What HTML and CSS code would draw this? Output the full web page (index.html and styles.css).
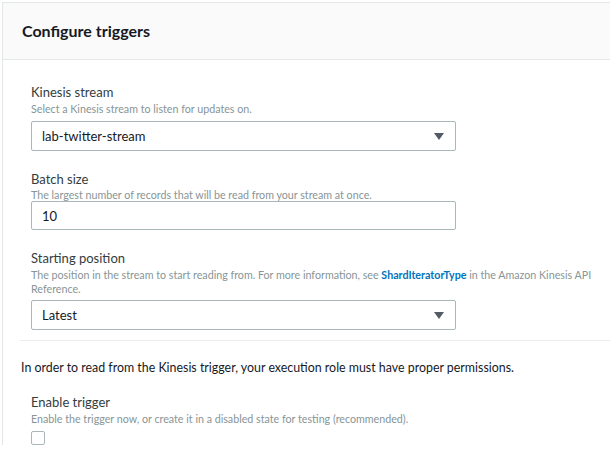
FILE: index.html
```html
<!DOCTYPE html>
<html>
<head>
<meta charset="utf-8">
<link rel="stylesheet" href="styles.css">
</head>
<body>
<div class="card">
  <div class="card-header"><h2 class="title">Configure triggers</h2></div>
  <div class="card-body">
    <div class="fields">
      <div class="field">
        <div class="label">Kinesis stream</div>
        <div class="hint">Select a Kinesis stream to listen for updates on.</div>
        <div class="control select"><span>lab-twitter-stream</span><span class="caret"></span></div>
      </div>
      <div class="field">
        <div class="label">Batch size</div>
        <div class="hint short">The largest number of records that will be read from your stream at once.</div>
        <div class="control input tight"><span>10</span></div>
      </div>
      <div class="field">
        <div class="label">Starting position</div>
        <div class="hint wide">The position in the stream to start reading from. For more information, see <a class="link">ShardIteratorType</a> in the Amazon Kinesis API Reference.</div>
        <div class="control select after-wide"><span>Latest</span><span class="caret"></span></div>
      </div>
    </div>
    <div class="divider"></div>
    <p class="note">In order to read from the Kinesis trigger, your execution role must have proper permissions.</p>
    <div class="field enable">
      <div class="label">Enable trigger</div>
      <div class="hint">Enable the trigger now, or create it in a disabled state for testing (recommended).</div>
      <div class="checkbox"></div>
    </div>
  </div>
</div>
</body>
</html>
```
FILE: styles.css
```css
html, body {
  margin: 0;
  padding: 0;
  background: #ffffff;
  font-family: "Lato", "Open Sans", sans-serif;
  color: #16191f;
}
.card {
  margin: 2px 0 0 2px;
  border-top: 1px solid #e4e7e7;
  border-left: 1px solid #e4e7e7;
  background: #fff;
}
.card-header {
  background: #fafafa;
  border-bottom: 1px solid #e4e7e7;
  height: 57px;
  box-sizing: border-box;
  padding: 0 0 1px 19px;
  display: flex;
  align-items: center;
}
.title {
  margin: 0;
  font-size: 16px;
  font-weight: 700;
  color: #16191f;
}
.card-body {
  padding: 24px 0 0 17px;
}
.fields {
  padding-left: 11px;
  display: flex;
  flex-direction: column;
  gap: 20px;
}
.label {
  font-size: 13px;
  color: #333d3e;
  line-height: 16px;
}
.hint {
  font-size: 10.7px;
  color: #879596;
  line-height: 14px;
  margin-top: 2px;
}
.hint.short {
  line-height: 12px;
}
.hint.wide {
  width: 572px;
}
.link {
  color: #0073bb;
  font-weight: 700;
}
.control {
  margin-top: 5px;
  height: 28px;
  border: 1px solid #aab7b8;
  border-radius: 2px;
  display: flex;
  align-items: center;
  justify-content: space-between;
  padding: 0 11px 0 10px;
  width: 402px;
  font-size: 13px;
  color: #16191f;
}
.control.tight {
  margin-top: 0;
  height: 27px;
}
.control.after-wide {
  margin-top: 4px;
}
.caret {
  width: 0;
  height: 0;
  border-left: 5.5px solid transparent;
  border-right: 5.5px solid transparent;
  border-top: 7px solid #545b64;
}
.divider {
  margin-top: 10px;
  height: 1px;
  background: #eaeded;
}
.note {
  margin: 18px 0 0 1px;
  font-size: 12.4px;
  color: #16191f;
  line-height: 18px;
}
.enable {
  margin: 17px 0 0 11px;
}
.checkbox {
  margin-top: 5px;
  width: 12px;
  height: 12px;
  border: 1px solid #aab7b8;
  border-radius: 2px;
}
```
